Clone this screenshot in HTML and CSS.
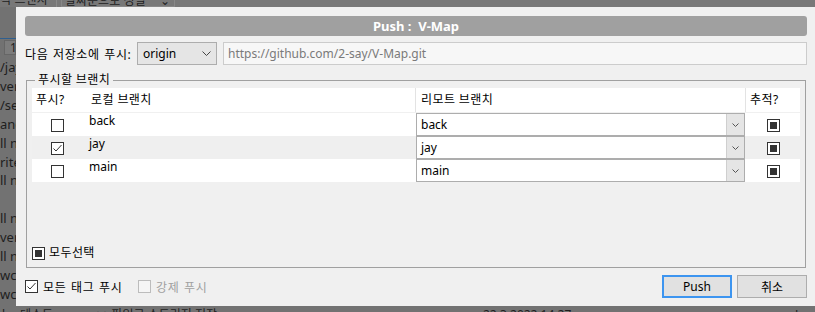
FILE: index.html
```html
<!DOCTYPE html>
<html lang="ko">
<head>
<meta charset="utf-8">
<title>Push : V-Map</title>
<link rel="stylesheet" href="styles.css">
</head>
<body>
<div class="screen">
  <div class="backdrop">
    <div class="bg-top">
      <span class="bg-tab">격 브랜치</span>
      <span class="bg-sort">날짜순으로 정렬 <span class="bg-caret">⌄</span></span>
    </div>
    <div class="bg-mid">
      <div class="bg-left">
        <div class="bg-blue"></div>
        <div class="bg-num">1</div>
        <div class="bg-lines">
          <div>/jay</div>
          <div>ver</div>
          <div>/se</div>
          <div>and</div>
          <div>ll n</div>
          <div>rite</div>
          <div>ll n</div>
          <div>&nbsp;</div>
          <div>ll n</div>
          <div>ver</div>
          <div>ll n</div>
          <div>wc</div>
          <div>wc</div>
        </div>
      </div>
    </div>
    <div class="bg-bottom">
      <span class="bg-b1">l</span>
      <span class="bg-b2">테스트 page - ++ 파일로 스토리지 저장</span>
      <span class="bg-b3">22.3.2022 14:27</span>
      <span class="bg-b4">Jay</span>
    </div>
  </div>

  <div class="dialog">
    <div class="title">Push :&nbsp; V-Map</div>

    <div class="repo-row">
      <span class="repo-label">다음 저장소에 푸시:</span>
      <div class="select">
        <span>origin</span>
        <svg class="chev" width="9" height="5" viewBox="0 0 9 5"><polyline points="0.5,0.5 4.5,4.5 8.5,0.5" fill="none" stroke="#444" stroke-width="1"/></svg>
      </div>
      <div class="url">https://github.com/2-say/V-Map.git</div>
    </div>

    <fieldset class="group">
      <legend>푸시할 브랜치</legend>
      <div class="group-body">
        <div class="table">
          <div class="row head">
            <div class="c1">푸시?</div>
            <div class="c2">로컬 브랜치</div>
            <div class="c3 div">리모트 브랜치</div>
            <div class="c4 div">추적?</div>
          </div>
          <div class="row">
            <div class="c1"><span class="cb"></span></div>
            <div class="c2 local">back</div>
            <div class="c3"><div class="combo"><span class="combo-text">back</span><span class="combo-btn"><svg width="7" height="4" viewBox="0 0 7 4"><polyline points="0.5,0.5 3.5,3.5 6.5,0.5" fill="none" stroke="#555" stroke-width="1"/></svg></span></div></div>
            <div class="c4"><span class="cb ind"><i></i></span></div>
          </div>
          <div class="row alt">
            <div class="c1"><span class="cb"><svg width="11" height="11" viewBox="0 0 11 11"><polyline points="1.5,5.5 4,8 9.5,2" fill="none" stroke="#333" stroke-width="1"/></svg></span></div>
            <div class="c2 local">jay</div>
            <div class="c3"><div class="combo"><span class="combo-text">jay</span><span class="combo-btn"><svg width="7" height="4" viewBox="0 0 7 4"><polyline points="0.5,0.5 3.5,3.5 6.5,0.5" fill="none" stroke="#555" stroke-width="1"/></svg></span></div></div>
            <div class="c4"><span class="cb ind"><i></i></span></div>
          </div>
          <div class="row">
            <div class="c1"><span class="cb"></span></div>
            <div class="c2 local">main</div>
            <div class="c3"><div class="combo"><span class="combo-text">main</span><span class="combo-btn"><svg width="7" height="4" viewBox="0 0 7 4"><polyline points="0.5,0.5 3.5,3.5 6.5,0.5" fill="none" stroke="#555" stroke-width="1"/></svg></span></div></div>
            <div class="c4"><span class="cb ind"><i></i></span></div>
          </div>
        </div>
        <div class="select-all">
          <span class="cb ind"><i></i></span>
          <span>모두선택</span>
        </div>
      </div>
    </fieldset>

    <div class="footer">
      <label class="opt first">
        <span class="cb"><svg width="11" height="11" viewBox="0 0 11 11"><polyline points="1.5,5.5 4,8 9.5,2" fill="none" stroke="#333" stroke-width="1"/></svg></span>
        <span class="ko">모든 태그 푸시</span>
      </label>
      <label class="opt disabled">
        <span class="cb"></span>
        <span class="ko">강제 푸시</span>
      </label>
      <div class="buttons">
        <button class="btn primary">Push</button>
        <button class="btn">취소</button>
      </div>
    </div>
  </div>
</div>
</body>
</html>
```

FILE: styles.css
```css
* { box-sizing: border-box; }
html, body { margin: 0; padding: 0; }
body {
  width: 815px;
  height: 312px;
  overflow: hidden;
  font-family: "Noto Sans", "Noto Sans CJK KR", sans-serif;
  font-size: 12px;
  color: #000;
}
.screen { position: relative; width: 815px; height: 312px; }

/* dimmed application behind the dialog */
.backdrop {
  height: 312px;
  display: flex;
  flex-direction: column;
  background: #727272;
  color: #1e1e1e;
}
.bg-top {
  height: 7px;
  overflow: hidden;
  display: flex;
  background: #787878;
  line-height: 16px;
  font-family: "Noto Sans CJK KR", sans-serif;
}
.bg-tab { margin-top: -9px; width: 57px; border-right: 1px solid #8a8a8a; }
.bg-sort {
  margin-top: -9px;
  margin-left: 4px;
  width: 114px;
  height: 16px;
  border: 1px solid #888;
  padding-left: 3px;
  position: relative;
}
.bg-caret { position: absolute; right: 4px; }
.bg-mid { flex: 1; display: flex; }
.bg-left { width: 16px; overflow: hidden; white-space: nowrap; }
.bg-blue { height: 1px; margin-top: 31px; background: #2f5f8f; }
.bg-num {
  height: 15px;
  margin-top: 1px;
  margin-left: 4px;
  background: #7c7c7c;
  border: 1px solid #666;
  line-height: 13px;
  padding-left: 5px;
}
.bg-lines { margin-top: 3px; line-height: 18.9px; font-size: 13px; }
.bg-bottom {
  height: 6px;
  overflow: hidden;
  display: flex;
  line-height: 16px;
  font-size: 12px;
}
.bg-bottom span { margin-top: 1px; }
.bg-b1 { width: 20px; padding-left: 2px; }
.bg-b2 { width: 463px; }
.bg-b3 { width: 312px; }

/* dialog */
.dialog {
  position: absolute;
  left: 16px;
  top: 7px;
  right: 0;
  height: 299px;
  background: #f0f0f0;
  padding: 9px 8px 0 9px;
  display: flex;
  flex-direction: column;
}
.title {
  height: 20px;
  flex: none;
  background: #a0a0a0;
  border-radius: 3px;
  color: #fff;
  font-weight: bold;
  font-size: 13px;
  line-height: 20px;
  text-align: center;
}
.repo-row {
  margin-top: 6px;
  height: 23px;
  flex: none;
  display: flex;
  align-items: center;
}
.repo-label {
  width: 112px;
  white-space: nowrap;
  letter-spacing: 0.6px;
  word-spacing: 1px;
}
.select {
  width: 80px;
  height: 23px;
  background: #e5e5e5;
  border: 1px solid #adadad;
  display: flex;
  align-items: center;
  justify-content: space-between;
  padding: 0 5px;
}
.url {
  margin-left: 6px;
  flex: 1;
  height: 23px;
  background: #f7f7f7;
  border: 1px solid #cccccc;
  color: #7a7a7a;
  line-height: 21px;
  padding-left: 4px;
}

.group {
  margin: 7px 1px 0 1px;
  flex: none;
  border: 1px solid #a0a0a0;
  padding: 0 5px;
  min-width: 0;
}
.group legend {
  margin-left: 3px;
  padding: 0 3px;
  line-height: 16px;
  font-size: 12px;
  letter-spacing: 0.4px;
}
.group-body {
  height: 179px;
  display: flex;
  flex-direction: column;
}
.table {
  background: #fff;
  display: flex;
  flex-direction: column;
}
.row {
  display: grid;
  grid-template-columns: 55px 328px 330px 55px;
  height: 23px;
}
.row.alt { background: #efefef; }
.row.head {
  height: 25px;
  border-bottom: 1px solid #f0f0f0;
  letter-spacing: 0.4px;
}
.head > div { height: 24px; line-height: 24px; padding-left: 4px; }
.head .c3 { padding-left: 5px; }
.head .div { border-left: 1px solid #e3e3e3; }
.row:not(.head) .c1, .row:not(.head) .c4 {
  display: flex;
  align-items: center;
  justify-content: center;
}
.row:not(.head) .c1 { padding-right: 5px; padding-top: 1px; }
.row:not(.head) .c4 { padding-left: 1px; padding-top: 1px; }
.local { padding-left: 2px; line-height: 16px; }
.c3 { padding-left: 1px; }
.combo {
  width: 329px;
  height: 23px;
  background: #fff;
  border: 1px solid #adadad;
  display: flex;
}
.combo-text { flex: 1; padding-left: 4px; line-height: 21px; }
.combo-btn {
  width: 18px;
  background: #e5e5e5;
  border-left: 1px solid #cfcfcf;
  display: flex;
  align-items: center;
  justify-content: center;
}

.cb {
  width: 13px;
  height: 13px;
  border: 1px solid #333;
  background: #fff;
  display: inline-flex;
  align-items: center;
  justify-content: center;
  flex: none;
}
.cb.ind i {
  display: block;
  width: 7px;
  height: 7px;
  background: #333;
}

.select-all {
  margin-top: auto;
  margin-bottom: 6px;
  display: flex;
  align-items: center;
  gap: 4px;
  line-height: 16px;
  letter-spacing: 0.4px;
}

.footer {
  margin-top: 7px;
  height: 23px;
  flex: none;
  display: flex;
  align-items: center;
}
.opt {
  display: flex;
  align-items: center;
  gap: 5px;
}
.opt.first { width: 113px; }
.ko { letter-spacing: 0.6px; word-spacing: 1px; }
.opt.disabled { color: #a0a0a0; }
.opt.disabled .cb { border-color: #bcbcbc; background: #f5f5f5; }
.buttons { margin-left: auto; display: flex; gap: 5px; }
.btn {
  width: 70px;
  height: 23px;
  font-family: "Noto Sans", "Noto Sans CJK KR", sans-serif;
  font-size: 12px;
  background: #e1e1e1;
  border: 1px solid #adadad;
  color: #000;
  padding: 0;
}
.btn.primary { border: 2px solid #3d95f0; }
```
